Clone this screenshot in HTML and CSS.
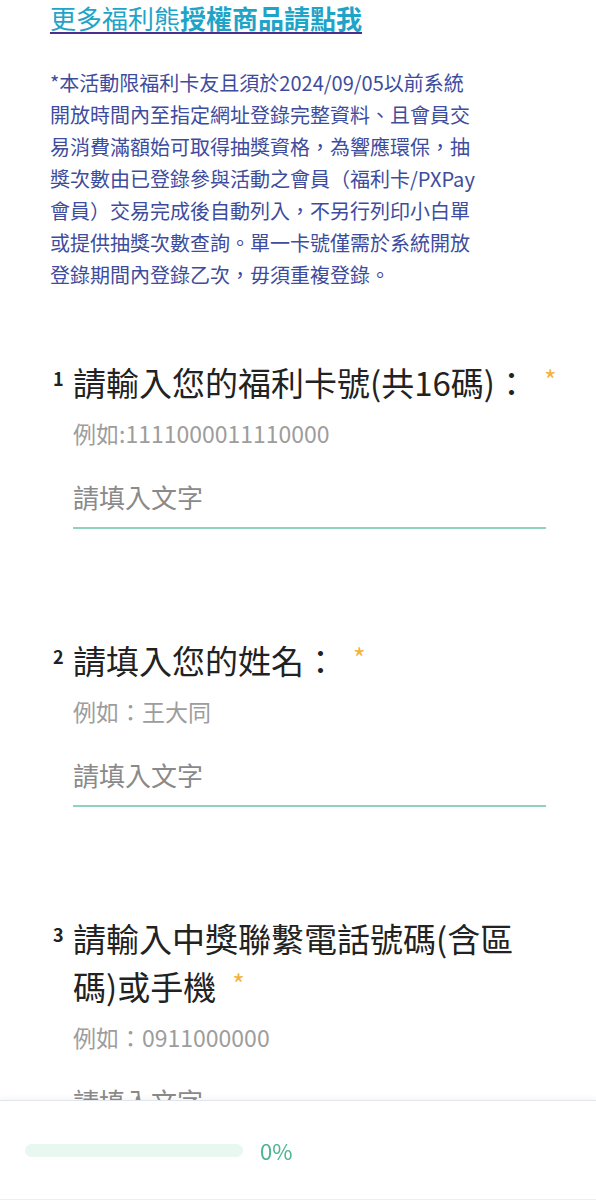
FILE: index.html
```html
<!DOCTYPE html>
<html lang="zh-Hant">
<head>
<meta charset="utf-8">
<title>福利熊登錄</title>
<link rel="stylesheet" href="styles.css">
</head>
<body>
<div class="page">
  <div class="link-row"><a class="more-link" href="#">更多福利熊<strong>授權商品請點我</strong></a></div>
  <p class="notice">*本活動限福利卡友且須於2024/09/05以前系統開放時間內至指定網址登錄完整資料、且會員交易消費滿額始可取得抽獎資格，為響應環保，抽獎次數由已登錄參與活動之會員（福利卡/PXPay會員）交易完成後自動列入，不另行列印小白單或提供抽獎次數查詢。單一卡號僅需於系統開放登錄期間內登錄乙次，毋須重複登錄。</p>

  <div class="question">
    <span class="qnum">1</span>
    <div class="qbody">
      <div class="qtitle">請輸入您的福利卡號(共16碼)：<span class="req">*</span></div>
      <div class="qhint">例如:1111000011110000</div>
      <input class="qinput" type="text" placeholder="請填入文字">
    </div>
  </div>

  <div class="question">
    <span class="qnum">2</span>
    <div class="qbody">
      <div class="qtitle">請填入您的姓名：<span class="req">*</span></div>
      <div class="qhint">例如：王大同</div>
      <input class="qinput" type="text" placeholder="請填入文字">
    </div>
  </div>

  <div class="question">
    <span class="qnum">3</span>
    <div class="qbody">
      <div class="qtitle">請輸入中獎聯繫電話號碼(含區碼)或手機<span class="req">*</span></div>
      <div class="qhint">例如：0911000000</div>
      <input class="qinput" type="text" placeholder="請填入文字">
    </div>
  </div>
</div>

<div class="progress-bar">
  <div class="track"><div class="fill" style="width:0%"></div></div>
  <span class="pct">0%</span>
</div>
</body>
</html>
```
FILE: styles.css
```css
* { box-sizing: border-box; }

html, body {
  margin: 0;
  padding: 0;
  background: #ffffff;
}

body {
  font-family: "Noto Sans CJK TC", "Noto Sans", sans-serif;
  color: #222222;
}

.page {
  padding: 0 0 160px 50px;
}

.link-row {
  font-size: 26px;
  line-height: 36px;
}

.more-link {
  color: #1fa4c8;
  text-decoration: underline;
  text-decoration-color: #4a2f8f;
  text-decoration-thickness: 2px;
  text-underline-offset: 3px;
}

.more-link strong {
  font-weight: 700;
}

.notice {
  margin: 31px 0 0;
  width: 428px;
  font-size: 20px;
  line-height: 32px;
  color: #3e4c9e;
}

.question {
  display: flex;
  margin-top: 67px;
}

.question + .question {
  margin-top: 107px;
}

.qnum {
  flex: 0 0 23px;
  padding-left: 3px;
  font-size: 18px;
  font-weight: 700;
  line-height: 40px;
  color: #222222;
}

.qbody {
  width: 473px;
}

.qtitle {
  font-size: 33px;
  line-height: 48px;
  color: #222222;
}

.req {
  display: inline-block;
  margin-left: 16px;
  margin-right: -18px;
  font-size: 27px;
  line-height: 1;
  color: #f4b43c;
  vertical-align: 5px;
}

.qhint {
  margin-top: 11px;
  font-size: 23px;
  line-height: 32px;
  color: #9d9d9d;
}

.qinput {
  display: block;
  width: 473px;
  height: 50px;
  margin-top: 30px;
  padding: 0 0 14px 0;
  border: none;
  border-bottom: 2px solid #8fd3bd;
  outline: none;
  background: transparent;
  font-family: "Noto Sans CJK TC", "Noto Sans", sans-serif;
  font-size: 26px;
  color: #222222;
}

.qinput::placeholder {
  color: #8a8a8a;
}

.progress-bar {
  position: fixed;
  left: 0;
  right: 0;
  bottom: 0;
  height: 100px;
  display: flex;
  align-items: center;
  padding-left: 25px;
  background: #ffffff;
  border-top: 1px solid #e3e5ee;
  border-bottom: 1px solid #eeeeee;
  box-shadow: 0 -2px 5px rgba(40, 50, 90, 0.05);
}

.track {
  width: 218px;
  height: 13px;
  border-radius: 7px;
  background: #e9f7f1;
  overflow: hidden;
}

.fill {
  height: 100%;
  background: #4db391;
}

.pct {
  margin-left: 17px;
  font-size: 22px;
  line-height: 30px;
  color: #4db391;
}
```
